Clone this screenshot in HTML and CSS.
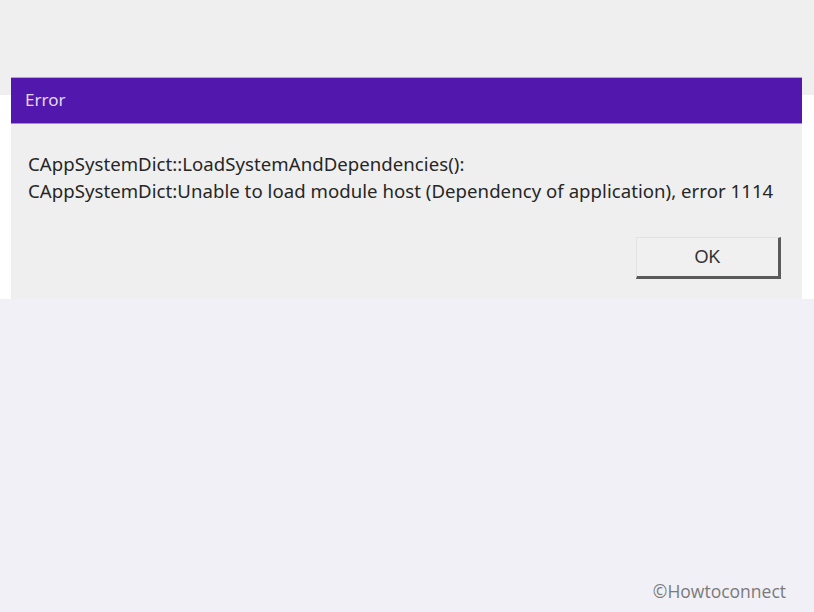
FILE: index.html
```html
<!DOCTYPE html>
<html>
<head>
<meta charset="utf-8">
<link rel="stylesheet" href="styles.css">
</head>
<body>
<div class="page">
  <div class="top"></div>
  <div class="dialog-row">
    <div class="dialog">
      <div class="titlebar">Error</div>
      <div class="dialog-body">
        <div class="message">
          <p>CAppSystemDict::LoadSystemAndDependencies():</p>
          <p>CAppSystemDict:Unable to load module host (Dependency of application), error 1114</p>
        </div>
        <div class="actions">
          <button class="ok-btn">OK</button>
        </div>
      </div>
    </div>
  </div>
  <div class="bottom">
    <span class="watermark">©Howtoconnect</span>
  </div>
</div>
</body>
</html>
```
FILE: styles.css
```css
* { box-sizing: border-box; }
html, body {
  margin: 0;
  padding: 0;
  width: 814px;
  height: 612px;
  overflow: hidden;
  background: #f1f0f6;
}
.page {
  display: flex;
  flex-direction: column;
  height: 612px;
}
.top {
  height: 77px;
  background: #efefef;
}
.dialog-row {
  display: flex;
  background: linear-gradient(#efefef 0 18px, #ffffff 18px);
  padding-left: 11px;
  padding-right: 12px;
}
.dialog {
  flex: 1;
  display: flex;
  flex-direction: column;
}
.titlebar {
  height: 47px;
  background: #5217ad;
  border-top: 1px solid #b79be0;
  border-bottom: 1px solid #a688d8;
  color: #e4d9f4;
  font-family: "Noto Sans", "Open Sans", sans-serif;
  font-size: 17px;
  padding-left: 14px;
  display: flex;
  align-items: center;
  padding-bottom: 2px;
}
.dialog-body {
  height: 175px;
  background: #efefef;
  padding: 26px 21px 0 17px;
  display: flex;
  flex-direction: column;
}
.message {
  font-family: "Noto Sans", "Open Sans", sans-serif;
  font-size: 18.6px;
  color: #262626;
  line-height: 27px;
  letter-spacing: 0.04px;
}
.message p {
  margin: 0;
  white-space: nowrap;
}
.actions {
  display: flex;
  justify-content: flex-end;
  margin-top: 33px;
}
.ok-btn {
  width: 145px;
  height: 42px;
  background: #f0f0f0;
  border-style: solid;
  border-width: 1px 3px 3px 1px;
  border-color: #e2e2e2 #5a5a5a #5a5a5a #e2e2e2;
  font-family: "Liberation Sans", Arial, sans-serif;
  font-size: 18px;
  color: #333;
  padding: 0;
}
.bottom {
  flex: 1;
  display: flex;
  justify-content: flex-end;
  align-items: flex-end;
  padding: 0 28px 9px 0;
}
.watermark {
  font-family: "Open Sans", sans-serif;
  font-size: 17.5px;
  color: #7a7a7a;
}
```
